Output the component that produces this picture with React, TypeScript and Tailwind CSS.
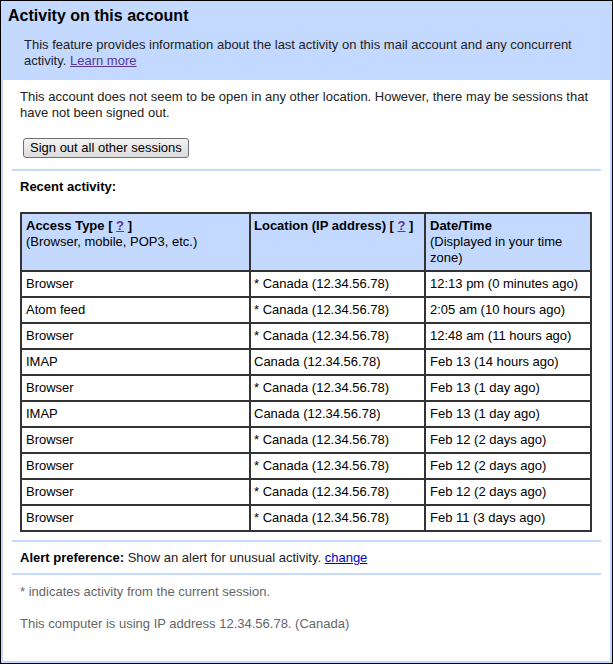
import React from "react";

const rows = [
  { type: "Browser", loc: "* Canada (12.34.56.78)", time: "12:13 pm (0 minutes ago)" },
  { type: "Atom feed", loc: "* Canada (12.34.56.78)", time: "2:05 am (10 hours ago)" },
  { type: "Browser", loc: "* Canada (12.34.56.78)", time: "12:48 am (11 hours ago)" },
  { type: "IMAP", loc: "Canada (12.34.56.78)", time: "Feb 13 (14 hours ago)" },
  { type: "Browser", loc: "* Canada (12.34.56.78)", time: "Feb 13 (1 day ago)" },
  { type: "IMAP", loc: "Canada (12.34.56.78)", time: "Feb 13 (1 day ago)" },
  { type: "Browser", loc: "* Canada (12.34.56.78)", time: "Feb 12 (2 days ago)" },
  { type: "Browser", loc: "* Canada (12.34.56.78)", time: "Feb 12 (2 days ago)" },
  { type: "Browser", loc: "* Canada (12.34.56.78)", time: "Feb 12 (2 days ago)" },
  { type: "Browser", loc: "* Canada (12.34.56.78)", time: "Feb 11 (3 days ago)" },
];

function Help() {
  return (
    <>
      [ <a href="#" className="text-[#5a3696] underline">?</a> ]
    </>
  );
}

export default function App() {
  return (
    <div className="w-[613px] h-[664px] border border-black bg-[#c3d9ff] flex flex-col font-['Liberation_Sans',Arial,sans-serif] text-[13px] leading-[16px] text-[#222]">
      {/* Header */}
      <div className="px-[7px] pt-[5px] pb-[11px]">
        <h1 className="text-[16px] leading-[20px] font-bold text-black">Activity on this account</h1>
        <p className="mt-[11px] ml-[16px]">
          This feature provides information about the last activity on this mail account and any concurrent
          activity. <a href="#" className="text-[#5a3696] underline">Learn more</a>
        </p>
      </div>

      {/* Body */}
      <div className="flex-1 mx-[2px] mb-[2px] bg-white pt-[9px]">
        <div className="px-[17px]">
          <p>
            This account does not seem to be open in any other location. However, there may be sessions that
            have not been signed out.
          </p>
          <button className="mt-[17px] ml-[3px] h-[20px] px-[6px] rounded-[3px] border border-[#707070] bg-gradient-to-b from-[#f2f2f2] to-[#dcdcdc] text-[13px] leading-[16px] text-black">
            Sign out all other sessions
          </button>
        </div>

        <div className="mx-[9px] mt-[11px] h-[2px] bg-[#c3d9ff]" />

        <div className="px-[17px]">
          <div className="mt-[8px] font-bold text-black">Recent activity:</div>

          <table className="mt-[17px] w-[572px] border border-[#333] border-separate border-spacing-0 text-black">
            <thead>
              <tr className="bg-[#c3d9ff] align-top">
                <th className="w-[229px] border border-[#333] px-[4px] pt-[4px] pb-[4px] h-[58px] text-left font-normal">
                  <b>Access Type <Help /></b>
                  <br />
                  (Browser, mobile, POP3, etc.)
                </th>
                <th className="w-[175px] border border-[#333] px-[3px] pt-[4px] pb-[4px] text-left font-normal">
                  <b>Location (IP address) <Help /></b>
                </th>
                <th className="border border-[#333] px-[4px] pt-[4px] pb-[4px] text-left font-normal">
                  <b>Date/Time</b>
                  <br />
                  (Displayed in your time zone)
                </th>
              </tr>
            </thead>
            <tbody>
              {rows.map((r, i) => (
                <tr key={i}>
                  <td className="border border-[#333] px-[4px] py-[4px] h-[26px]">{r.type}</td>
                  <td className="border border-[#333] px-[3px] py-[4px]">{r.loc}</td>
                  <td className="border border-[#333] px-[4px] py-[4px]">{r.time}</td>
                </tr>
              ))}
            </tbody>
          </table>
        </div>

        <div className="mx-[9px] mt-[8px] h-[2px] bg-[#c3d9ff]" />

        <div className="px-[17px] pt-[8px] pb-[7px]">
          <b className="text-black">Alert preference:</b> Show an alert for unusual activity.{" "}
          <a href="#" className="text-[#0000cc] underline">change</a>
        </div>

        <div className="mx-[9px] h-[2px] bg-[#c3d9ff]" />

        <div className="px-[17px] pt-[9px] text-[#666]">
          <p>* indicates activity from the current session.</p>
          <p className="mt-[16px]">This computer is using IP address 12.34.56.78. (Canada)</p>
        </div>
      </div>
    </div>
  );
}
